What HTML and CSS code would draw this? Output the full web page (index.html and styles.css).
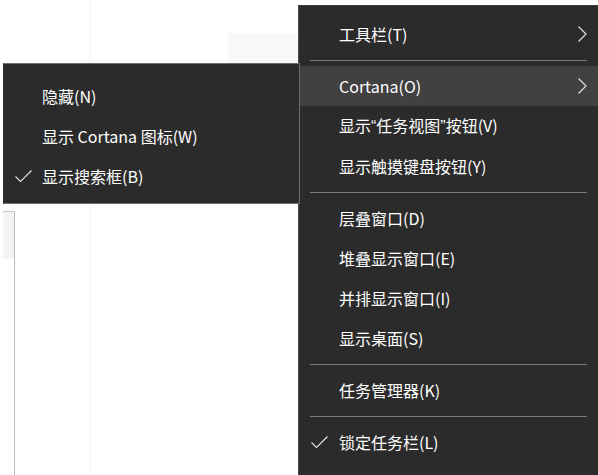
FILE: index.html
```html
<!DOCTYPE html>
<html>
<head>
  <meta charset="UTF-8">
  <title>Taskbar Menu</title>
  <link rel="stylesheet" href="styles.css">
</head>
<body>
  <div class="desk">
    <div class="bg-strip"></div>
    <div class="bg-block"></div>
    <div class="bg-frame"></div>

    <ul class="menu main">
      <li class="item"><span class="tick"></span><span class="label">工具栏(T)</span>
        <svg class="arrow" viewBox="0 0 9 16"><path d="M0.5 0.5 L8 8 L0.5 15.5" /></svg></li>
      <li class="sep"></li>
      <li class="item active"><span class="tick"></span><span class="label">Cortana(O)</span>
        <svg class="arrow" viewBox="0 0 9 16"><path d="M0.5 0.5 L8 8 L0.5 15.5" /></svg></li>
      <li class="item"><span class="tick"></span><span class="label">显示<span class="q">“</span>任务视图<span class="q">”</span>按钮(V)</span></li>
      <li class="item"><span class="tick"></span><span class="label">显示触摸键盘按钮(Y)</span></li>
      <li class="sep"></li>
      <li class="item"><span class="tick"></span><span class="label">层叠窗口(D)</span></li>
      <li class="item"><span class="tick"></span><span class="label">堆叠显示窗口(E)</span></li>
      <li class="item"><span class="tick"></span><span class="label">并排显示窗口(I)</span></li>
      <li class="item"><span class="tick"></span><span class="label">显示桌面(S)</span></li>
      <li class="sep"></li>
      <li class="item"><span class="tick"></span><span class="label">任务管理器(K)</span></li>
      <li class="sep"></li>
      <li class="item"><span class="tick">
        <svg viewBox="0 0 17 12"><path d="M0.5 6.5 L5.5 11.5 L16.5 0.5" /></svg></span><span class="label">锁定任务栏(L)</span></li>
    </ul>

    <ul class="menu sub">
      <li class="item"><span class="tick"></span><span class="label">隐藏(N)</span></li>
      <li class="item"><span class="tick"></span><span class="label">显示 Cortana 图标(W)</span></li>
      <li class="item"><span class="tick">
        <svg viewBox="0 0 17 12"><path d="M0.5 6.5 L5.5 11.5 L16.5 0.5" /></svg></span><span class="label">显示搜索框(B)</span></li>
    </ul>
  </div>
</body>
</html>
```

FILE: styles.css
```css
body { margin: 0; background: #fff; font-family: "Noto Sans CJK SC", "Noto Sans", sans-serif; }

.desk {
  position: relative;
  width: 598px;
  height: 475px;
  overflow: hidden;
  background: #fff;
}

/* faint desktop bits behind the menus */
.bg-strip {
  position: absolute;
  left: 89px;
  top: 0;
  width: 3px;
  height: 475px;
  background: #fbfbfb;
}
.bg-block {
  position: absolute;
  left: 228px;
  top: 33px;
  width: 70px;
  height: 30px;
  background: #f8f8f8;
}
.bg-frame {
  position: absolute;
  left: 3px;
  top: 211px;
  width: 11px;
  height: 264px;
  border-top: 1px solid #c9c9c9;
  border-right: 1px solid #b9b9b9;
  background: linear-gradient(#f4f4f4 0 47px, #fff 47px);
}

.menu {
  position: absolute;
  margin: 0;
  padding: 0;
  list-style: none;
  box-sizing: border-box;
  background: #2b2b2b;
  color: #fff;
  font-size: 16px;
}
.main {
  left: 298px;
  top: 5px;
  width: 300px;
  height: 470px;
  padding-top: 8px;
  border-left: 1px solid #4d4d4d;
  border-top: 1px solid #3a3a3a;
}
.sub {
  left: 3px;
  top: 63px;
  width: 297px;
  height: 141px;
  padding-top: 12px;
  border: 1px solid #6f6f6f;
  border-left-color: #2b2b2b;
}

.item {
  display: flex;
  align-items: center;
  height: 40px;
  padding-left: 12px;
  padding-right: 11px;
  white-space: nowrap;
}
.sub .item { padding-left: 11px; }
.item.active { background: #414141; }

.tick {
  display: flex;
  align-items: center;
  width: 28px;
  flex: none;
}
.sub .tick { width: 27px; }
.tick svg { width: 17px; height: 12px; }
.tick path, .arrow path {
  fill: none;
  stroke: #e6e6e6;
  stroke-width: 1.1;
}

.label { line-height: 20px; }
.label .q { font-family: "Liberation Sans", sans-serif; }
.arrow { margin-left: auto; width: 9px; height: 16px; }

.sep {
  height: 1px;
  margin: 6px 11px 5px 11px;
  background: #7d7d7d;
}
```
